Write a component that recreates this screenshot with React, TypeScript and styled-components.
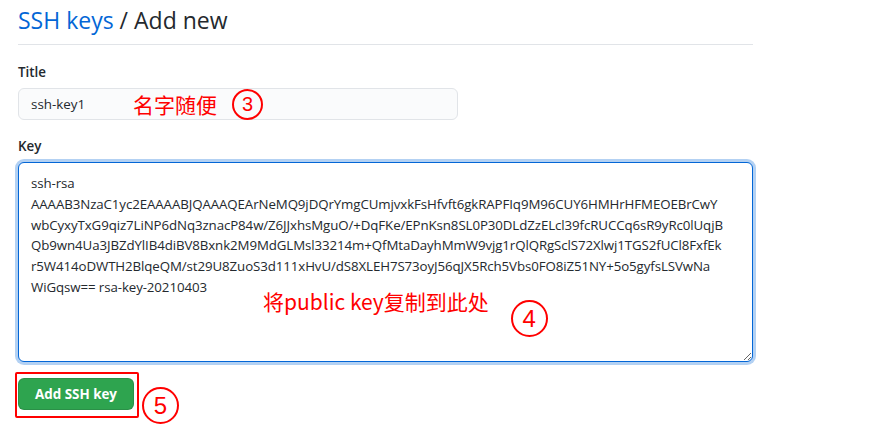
import React from "react";
import styled, { createGlobalStyle } from "styled-components";

const GlobalStyle = createGlobalStyle`
  html, body {
    margin: 0;
    padding: 0;
    background: #fff;
  }
  body {
    font-family: "Open Sans", "Noto Sans", "Liberation Sans", sans-serif;
    color: #24292e;
  }
`;

const RED = "#ff0000";
const CJK = `"Noto Sans CJK SC", "Noto Sans", sans-serif`;

const Page = styled.div`
  width: 753px;
  min-height: 445px;
  box-sizing: border-box;
  padding: 5px 0 0 18px;
`;

const Heading = styled.h1`
  margin: 0;
  padding-bottom: 9px;
  font-size: 23px;
  font-weight: 400;
  line-height: 30px;
  border-bottom: 1px solid #e1e4e8;
`;

const Crumb = styled.a`
  color: #0366d6;
  text-decoration: none;
`;

const FormGroup = styled.div<{ $top: number }>`
  margin-top: ${(p) => p.$top}px;
`;

const Label = styled.label`
  display: block;
  font-size: 13.4px;
  font-weight: 600;
  line-height: 21px;
  margin-bottom: 5px;
`;

const Field = styled.div<{ $width: number }>`
  position: relative;
  width: ${(p) => p.$width}px;
`;

const TextInput = styled.input`
  box-sizing: border-box;
  width: 100%;
  height: 32px;
  padding: 0 12px;
  font-family: inherit;
  font-size: 13.4px;
  color: #24292e;
  background: #fafbfc;
  border: 1px solid #e1e4e8;
  border-radius: 6px;
  outline: none;
`;

const KeyArea = styled.textarea`
  display: block;
  box-sizing: border-box;
  width: 100%;
  height: 200px;
  margin: 0;
  padding: 10px 12px;
  font-family: inherit;
  font-size: 13.3px;
  letter-spacing: -0.1px;
  line-height: 20.8px;
  color: #24292e;
  background: #fff;
  border: 1px solid #0366d6;
  border-radius: 6px;
  box-shadow: 0 0 0 3px rgba(3, 102, 214, 0.3);
  outline: none;
  overflow: hidden;
  white-space: pre;
  resize: vertical;
`;

/* red hand-drawn annotations laid over the form */
const Overlay = styled.div<{ $left: number; $top: number; $align: string }>`
  position: absolute;
  left: ${(p) => p.$left}px;
  top: ${(p) => p.$top}px;
  display: flex;
  align-items: ${(p) => p.$align};
  pointer-events: none;
`;

const Note = styled.span<{ $size: number }>`
  font-family: ${CJK};
  font-size: ${(p) => p.$size}px;
  line-height: 1;
  color: ${RED};
  white-space: nowrap;
`;

const Marker = styled.span<{ $size: number; $gap: number; $drop?: number }>`
  box-sizing: border-box;
  flex: none;
  width: ${(p) => p.$size}px;
  height: ${(p) => p.$size}px;
  margin-left: ${(p) => p.$gap}px;
  margin-top: ${(p) => p.$drop ?? 0}px;
  display: flex;
  align-items: center;
  justify-content: center;
  border: 2px solid ${RED};
  border-radius: 50%;
  font-family: "Liberation Sans", sans-serif;
  font-size: ${(p) => Math.round(p.$size * 0.66)}px;
  color: ${RED};
`;

const Actions = styled.div`
  display: flex;
  align-items: flex-start;
  margin: 10px 0 0 -3px;
`;

const Highlight = styled.div`
  padding: 4px 3px 6px 1px;
  border: 2px solid ${RED};
  border-radius: 2px;
`;

const SubmitButton = styled.button`
  display: block;
  height: 32px;
  padding: 0 16px;
  font-family: inherit;
  font-size: 13.4px;
  font-weight: 700;
  color: #fff;
  background: #2ea44f;
  border: 1px solid rgba(27, 31, 35, 0.15);
  border-radius: 6px;
  cursor: pointer;
`;

const KEY_LINES = [
  "ssh-rsa",
  "AAAAB3NzaC1yc2EAAAABJQAAAQEArNeMQ9jDQrYmgCUmjvxkFsHfvft6gkRAPFIq9M96CUY6HMHrHFMEOEBrCwY",
  "wbCyxyTxG9qiz7LiNP6dNq3znacP84w/Z6JJxhsMguO/+DqFKe/EPnKsn8SL0P30DLdZzELcl39fcRUCCq6sR9yRc0lUqjB",
  "Qb9wn4Ua3JBZdYlIB4diBV8Bxnk2M9MdGLMsl33214m+QfMtaDayhMmW9vjg1rQlQRgSclS72Xlwj1TGS2fUCl8FxfEk",
  "r5W414oDWTH2BlqeQM/st29U8ZuoS3d111xHvU/dS8XLEH7S73oyJ56qJX5Rch5Vbs0FO8iZ51NY+5o5gyfsLSVwNa",
  "WiGqsw== rsa-key-20210403",
];

export default function App() {
  return (
    <Page>
      <GlobalStyle />
      <Heading>
        <Crumb href="#">SSH keys</Crumb> / Add new
      </Heading>

      <FormGroup $top={17}>
        <Label htmlFor="title">Title</Label>
        <Field $width={440}>
          <TextInput id="title" readOnly value="ssh-key1" />
          <Overlay $left={115} $top={1} $align="center">
            <Note $size={21}>名字随便</Note>
            <Marker $size={31} $gap={15}>3</Marker>
          </Overlay>
        </Field>
      </FormGroup>

      <FormGroup $top={16}>
        <Label htmlFor="key">Key</Label>
        <Field $width={735}>
          <KeyArea id="key" readOnly value={KEY_LINES.join("\n")} />
          <Overlay $left={245} $top={129} $align="flex-start">
            <Note $size={21}>将public key复制到此处</Note>
            <Marker $size={37} $gap={22} $drop={9}>4</Marker>
          </Overlay>
        </Field>
      </FormGroup>

      <Actions>
        <Highlight>
          <SubmitButton type="button">Add SSH key</SubmitButton>
        </Highlight>
        <Marker $size={37} $gap={3} $drop={15}>5</Marker>
      </Actions>
    </Page>
  );
}
